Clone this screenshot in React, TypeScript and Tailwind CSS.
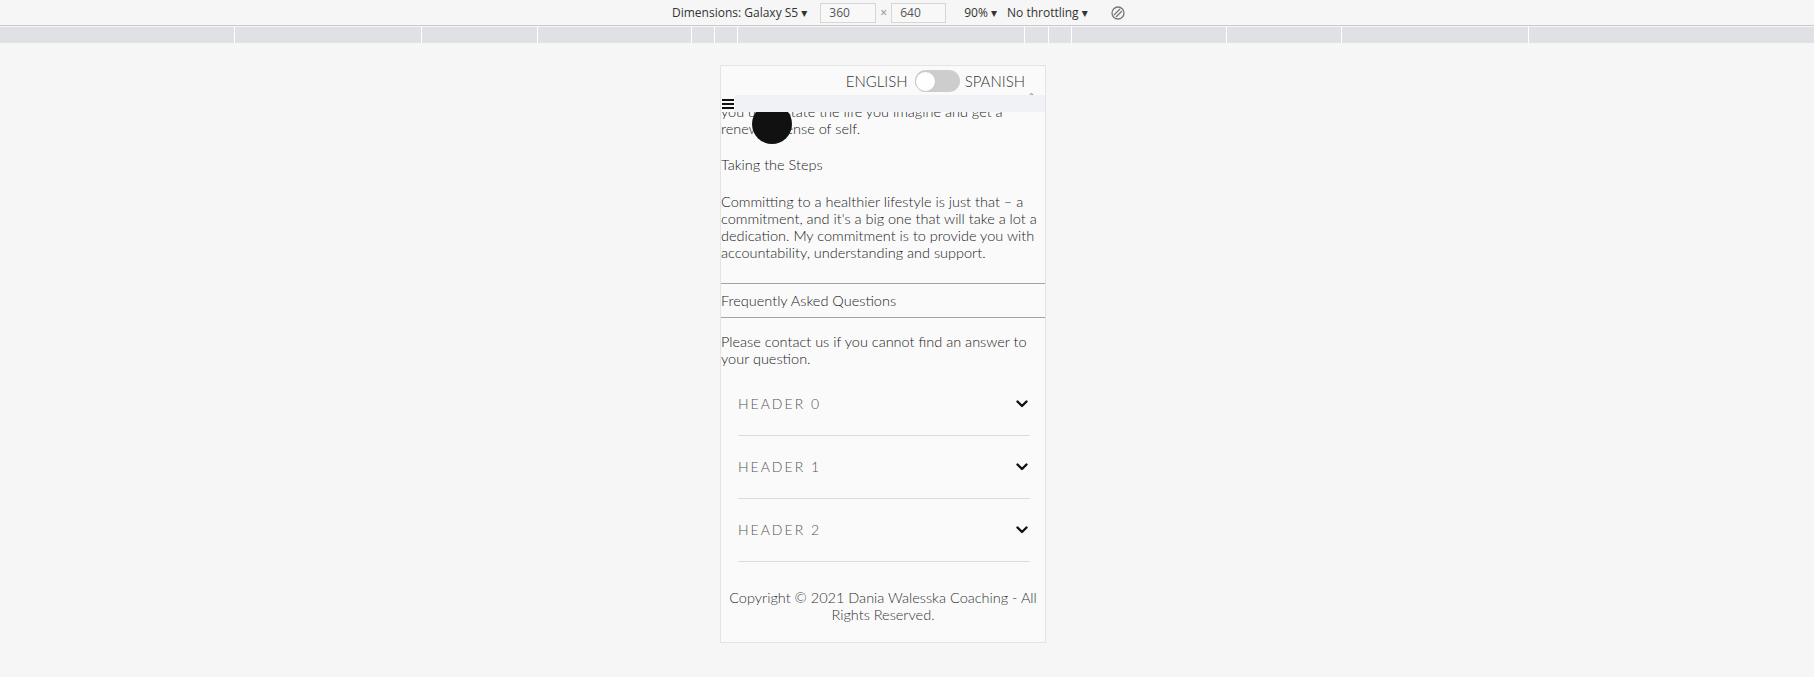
import React from "react";

const segments = [235, 187, 116, 154, 23, 23, 287, 24, 23, 155, 115, 187, 285];

const bodyLines = {
  intro: ["you u​nderstate the life you imagine and get a", "renewed sense of self."],
  steps: [
    "Committing to a healthier lifestyle is just that – a",
    "commitment, and it's a big one that will take a lot a",
    "dedication. My commitment is to provide you with",
    "accountability, understanding and support.",
  ],
};

const faqs = ["Header 0", "Header 1", "Header 2"];

const Chevron: React.FC = () => (
  <svg width="12" height="8" viewBox="0 0 12 8" className="mr-[2px]">
    <polyline
      points="1.5,1.5 6,6 10.5,1.5"
      fill="none"
      stroke="#111"
      strokeWidth="2.4"
      strokeLinecap="round"
      strokeLinejoin="round"
    />
  </svg>
);

const Line: React.FC<{ text: string }> = ({ text }) => (
  <div className="whitespace-nowrap">{text}</div>
);

const App: React.FC = () => {
  return (
    <div className="w-full h-[677px] bg-[#f6f6f6] overflow-hidden">
      {/* DevTools device toolbar */}
      <div
        className="h-[25px] flex items-center pl-[672px] text-[12px] text-[#333]"
        style={{ fontFamily: '"Open Sans", "DejaVu Sans", sans-serif' }}
      >
        <span className="whitespace-nowrap">Dimensions: Galaxy S5 ▾</span>
        <div className="ml-[13px] w-[56px] h-[20px] border border-[#d6d6d6] bg-[#f8f8f8] pl-[8px] leading-[18px] text-[#555]">
          360
        </div>
        <span className="mx-[4px] text-[#888]">×</span>
        <div className="w-[55px] h-[20px] border border-[#d6d6d6] bg-[#f8f8f8] pl-[8px] leading-[18px] text-[#555]">
          640
        </div>
        <span className="ml-[18px] whitespace-nowrap">90% ▾</span>
        <span className="ml-[10px] whitespace-nowrap">No throttling ▾</span>
        <svg width="16" height="16" viewBox="0 0 16 16" className="ml-[22px]">
          <circle cx="8" cy="8" r="6" fill="none" stroke="#777" strokeWidth="1.3" />
          <line x1="4" y1="10" x2="10" y2="4" stroke="#777" strokeWidth="1.3" />
          <line x1="6" y1="12" x2="12" y2="6" stroke="#777" strokeWidth="1.3" />
        </svg>
      </div>
      <div className="h-px bg-[#cacaca]" />
      {/* media query bar */}
      <div className="mt-px h-[16px] flex">
        {segments.map((w, i) => (
          <div
            key={i}
            className="h-full bg-[#dfe1e5] border-r border-white last:border-r-0"
            style={{ width: w }}
          />
        ))}
      </div>

      {/* device frame */}
      <div
        className="mt-[22px] ml-[720px] w-[326px] h-[578px] border border-[#e4e4e4] bg-[#fafafa] flex flex-col overflow-hidden text-[14.5px] leading-[17px] text-[#222] font-light"
        style={{ fontFamily: 'Lato, "Open Sans", sans-serif' }}
      >
        {/* header */}
        <div className="h-[46px] shrink-0 flex flex-col">
          <div className="pt-[4px] pr-[20px] flex items-center justify-end text-[#333] text-[15px] relative">
            <span>ENGLISH</span>
            <div className="ml-[7px] mr-[5px] w-[45px] h-[22px] rounded-full bg-[#cdcdcd] flex items-center">
              <div className="w-[21px] h-[21px] rounded-full bg-white border border-[#c6c6c6]" />
            </div>
            <span>SPANISH</span>
            <span className="absolute right-[10px] top-[22px] text-[8px] text-[#666]">⌃</span>
          </div>
          <div className="flex items-center mt-[3px] h-[17px]">
            <div className="w-[14px] flex flex-col gap-[2px] pl-[1px]">
              <div className="h-[2px] w-[12px] bg-[#111]" />
              <div className="h-[2px] w-[12px] bg-[#111]" />
              <div className="h-[2px] w-[12px] bg-[#111]" />
            </div>
            <div className="flex-1 h-full bg-[#f0f2f6]" />
          </div>
        </div>

        {/* scrolled content */}
        <div className="flex-1 overflow-hidden relative">
          <div className="-mt-[9px]">
            <div className="relative">
              {bodyLines.intro.map((t) => (
                <Line key={t} text={t} />
              ))}
              <div className="absolute left-[31px] top-[1px] w-[40px] h-[40px] rounded-full bg-[#111]" />
            </div>
            <p className="mt-[19px]">Taking the Steps</p>
            <div className="mt-[20px]">
              {bodyLines.steps.map((t) => (
                <Line key={t} text={t} />
              ))}
            </div>
            <hr className="mt-[22px] border-0 h-px bg-[#a3a3a3]" />
            <p className="mt-[8px] mb-[8px]">Frequently Asked Questions</p>
            <hr className="border-0 h-px bg-[#a3a3a3]" />
            <div className="mt-[15px]">
              <Line text="Please contact us if you cannot find an answer to" />
              <Line text="your question." />
            </div>

            {/* accordion */}
            <div className="mt-[6px] pl-[17px] pr-[15px]">
              {faqs.map((f) => (
                <div
                  key={f}
                  className="py-[22px] border-b border-[#dcdcdc] flex items-center justify-between"
                >
                  <span className="uppercase tracking-[2px] text-[#555] leading-[18px] font-light text-[14px]">
                    {f}
                  </span>
                  <Chevron />
                </div>
              ))}
            </div>

            <div className="mt-[27px] px-[4px] text-center text-[#333] whitespace-nowrap">
              Copyright © 2021 Dania Walesska Coaching - All
              <br />
              Rights Reserved.
            </div>
          </div>
        </div>
      </div>
    </div>
  );
};

export default App;
